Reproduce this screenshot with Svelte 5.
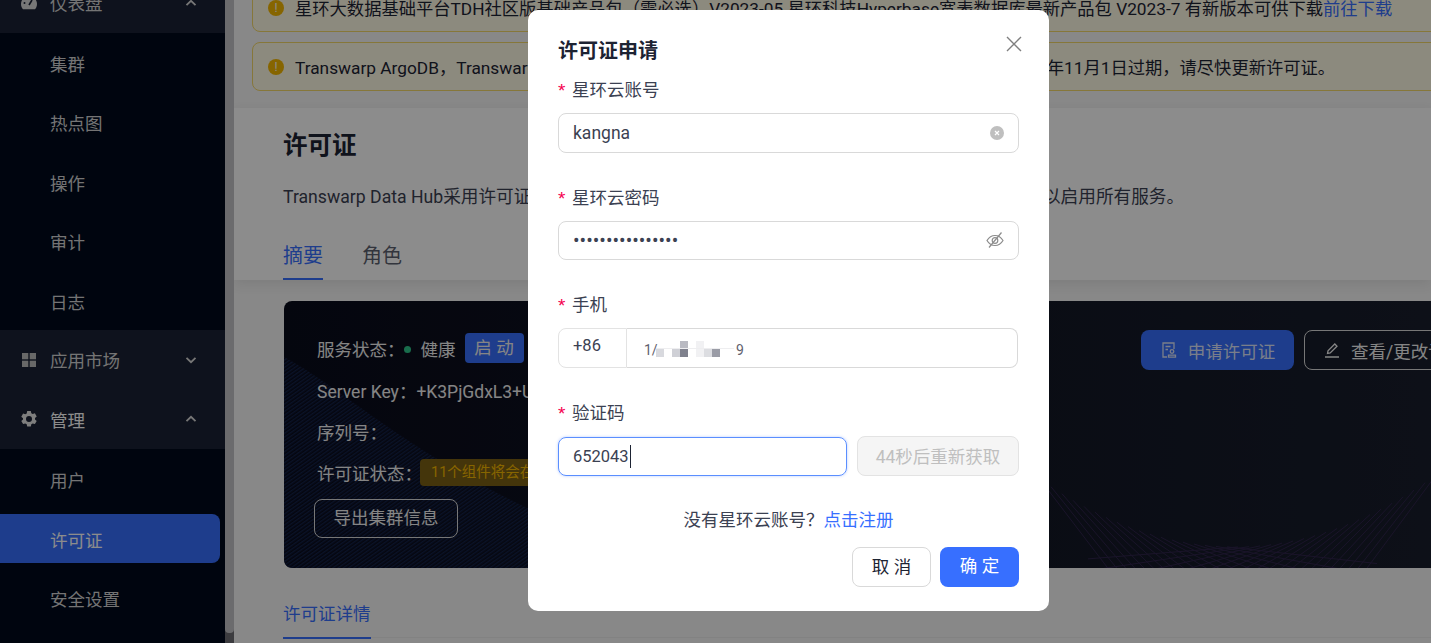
<script>
	const subA = ['集群', '热点图', '操作', '审计', '日志']
	const subB = ['用户', '许可证', '安全设置']

	// string-art decoration at the bottom right of the dark card
	const strands = []
	for (let x = 1040; x <= 1440; x += 11) {
		const dx = x - 1235
		const y = 246 - 0.00178 * dx * dx
		const slope = 2 * 0.00178 * Math.abs(dx) * 1.8 + 0.06
		const run = dx > 0 ? -150 : 150
		strands.push({ x1: x - 284, y1: y, x2: x - 284 + run, y2: y + slope * 150 })
	}
</script>

<div class="page">
	<aside class="sidebar">
		<div class="group">
			<svg class="gicon" viewBox="0 0 18 18"><path d="M9 2a8 8 0 0 0-8 8c0 2.2.8 4 2 5.2h12c1.2-1.2 2-3 2-5.2a8 8 0 0 0-8-8z" fill="#d9d9d9"/><path d="M9 11l3-5" stroke="#1b2235" stroke-width="1.6"/><circle cx="4.5" cy="9" r="1" fill="#1b2235"/><circle cx="9" cy="5" r="1" fill="#1b2235"/></svg>
			<span class="gtext">仪表盘</span>
			<svg class="chev" viewBox="0 0 12 8"><path d="M1.5 6.2 6 1.8l4.5 4.4" /></svg>
		</div>
		{#each subA as item}
			<div class="item">{item}</div>
		{/each}
		<div class="group">
			<svg class="gicon" viewBox="0 0 18 18" fill="#bdbdbd"><rect x="2" y="2" width="6.3" height="6.3"/><rect x="9.7" y="2" width="6.3" height="6.3"/><rect x="2" y="9.7" width="6.3" height="6.3"/><rect x="9.7" y="9.7" width="6.3" height="6.3"/></svg>
			<span class="gtext">应用市场</span>
			<svg class="chev" viewBox="0 0 12 8"><path d="M1.5 1.8 6 6.2l4.5-4.4" /></svg>
		</div>
		<div class="group">
			<svg class="gicon" viewBox="0 0 18 18"><path fill="#e6e6e6" fill-rule="evenodd" d="M7.2 1h3.6l.5 2.2 1.4.8 2.2-.7 1.8 3.1-1.7 1.5v1.6l1.7 1.5-1.8 3.1-2.2-.7-1.4.8-.5 2.2H7.2l-.5-2.2-1.4-.8-2.2.7-1.8-3.1 1.7-1.5V8.200L1.300 6.700l1.800-3.100 2.200.7 1.400-.8zM9 6a3 3 0 1 0 0 6 3 3 0 0 0 0-6z"/></svg>
			<span class="gtext on">管理</span>
			<svg class="chev" viewBox="0 0 12 8"><path d="M1.5 6.2 6 1.8l4.5 4.4" /></svg>
		</div>
		{#each subB as item}
			<div class="item" class:active={item === '许可证'}>{item}</div>
		{/each}
	</aside>

	<div class="scrollbar"><div class="thumb"></div></div>

	<main class="main">
		<div class="alert">
			<span class="alert-icon">!</span>
			<span>星环大数据基础平台TDH社区版基础产品包（需必选）V2023-05 星环科技Hyperbase宽表数据库最新产品包 V2023-7 有新版本可供下载<span class="more">前往下载</span></span>
		</div>
		<div class="alert">
			<span class="alert-icon">!</span>
			<span>Transwarp ArgoDB，Transwarp Inceptor，Transwarp Slipstream 等 11个组件的许可证将会在2023年11月1日过期，请尽快更新许可证。</span>
		</div>

		<section class="head">
			<h1>许可证</h1>
			<p>Transwarp Data Hub采用许可证授权方式，请在申请许可证后更新集群的许可证并重新启动集群，以启用所有服务。</p>
			<div class="tabs">
				<span class="tab current">摘要</span>
				<span class="tab">角色</span>
			</div>
		</section>

		<section class="card">
			<svg class="decor" width="1200" height="267" viewBox="0 0 1200 267">
				<defs>
					<pattern id="hatch" width="3" height="3" patternUnits="userSpaceOnUse" patternTransform="rotate(-35)">
						<rect width="3" height="1.4" fill="#14234a" />
					</pattern>
				</defs>
				<path d="M0 56C60 88 120 150 260 215V267H0Z" fill="url(#hatch)" />
				{#each strands as s}
					<line x1={s.x1} y1={s.y1} x2={s.x2} y2={s.y2} stroke="#30254c" stroke-width="1" />
				{/each}
			</svg>
			<div class="info">
				<div class="row first">
					<span>服务状态：</span><i class="dot"></i><span class="health">健康</span>
					<span class="start">启 动</span>
				</div>
				<div class="row">Server Key：+K3PjGdxL3+UwQe7mN2</div>
				<div class="row">序列号：</div>
				<div class="row">
					<span>许可证状态：</span><span class="warn">11个组件将会在2023年11月1日过期</span>
				</div>
				<div class="export">导出集群信息</div>
			</div>
			<div class="actions">
				<div class="btn-blue">
					<svg width="18" height="18" viewBox="0 0 18 18" fill="none" stroke="currentColor" stroke-width="1.3"><path d="M7 16H3V2h11v6"/><path d="M5.500 5.500h5M5.500 8.500h2.500"/><circle cx="12" cy="10.500" r="1.800"/><path d="M8.500 16.200h7v-2h-7z"/></svg>
					<span>申请许可证</span>
				</div>
				<div class="btn-line">
					<svg width="18" height="18" viewBox="0 0 18 18" fill="none" stroke="currentColor" stroke-width="1.300"><path d="M4.500 12.500 5 9.800 11.800 3l2.200 2.200-6.800 6.800zM2 16h14"/></svg>
					<span>查看/更改许可证</span>
				</div>
			</div>
		</section>

		<div class="detail"><span>许可证详情</span></div>
	</main>

	<div class="overlay">
		<div class="modal">
			<svg class="close" width="16" height="16" viewBox="0 0 16 16"><path d="M1 1l14 14M15 1 1 15" stroke="#7f7f7f" stroke-width="1.400" /></svg>
			<div class="title">许可证申请</div>

			<div class="field">
				<div class="label"><b>*</b>星环云账号</div>
				<div class="box">
					<input value="kangna" />
					<svg width="14" height="14" viewBox="0 0 14 14"><circle cx="7" cy="7" r="7" fill="#bfbfbf"/><path d="M5 5l4 4M9 5 5 9" stroke="#fff" stroke-width="1.200"/></svg>
				</div>
			</div>

			<div class="field">
				<div class="label"><b>*</b>星环云密码</div>
				<div class="box">
					<input class="secret" type="password" value="aaaaaaaaaaaaaaaa" />
					<svg width="18" height="18" viewBox="0 0 18 18" fill="none" stroke="#8c8c8c" stroke-width="1.200"><path d="M1 9.500c2-3.300 4.600-5 8-5s6 1.700 8 5c-2 3.300-4.600 5-8 5s-6-1.700-8-5z"/><circle cx="9" cy="9.500" r="2.800"/><path d="M3 16.500 15.500 1.500"/></svg>
				</div>
			</div>

			<div class="field">
				<div class="label"><b>*</b>手机</div>
				<div class="phone">
					<div class="prefix">+86</div>
					<div class="box grow">
						<span class="masked">1/</span>
						<svg class="mosaic" width="96" height="20" viewBox="0 0 96 20">
							<rect x="13" y="8" width="8" height="8" fill="#d8d9de"/>
							<rect x="29" y="8" width="8" height="8" fill="#cfd0d6"/>
							<rect x="37" y="0" width="8" height="8" fill="#b9bac2"/>
							<rect x="37" y="8" width="8" height="8" fill="#7f818d"/>
							<rect x="53" y="0" width="8" height="16" fill="#f1f1f3"/>
							<rect x="61" y="8" width="8" height="8" fill="#dcdde1"/>
							<rect x="69" y="8" width="8" height="8" fill="#9a9ca6"/>
							<rect x="13" y="7" width="78" height="1" fill="#eeeef0"/>
						</svg>
						<span class="masked last">9</span>
					</div>
				</div>
			</div>

			<div class="field">
				<div class="label"><b>*</b>验证码</div>
				<div class="code-row">
					<div class="box focus"><span>652043</span><i class="caret"></i></div>
					<div class="resend">44秒后重新获取</div>
				</div>
			</div>

			<div class="signup">没有星环云账号？<span>点击注册</span></div>

			<div class="footer">
				<div class="cancel">取 消</div>
				<div class="ok">确 定</div>
			</div>
		</div>
	</div>
</div>

<style>
	:global(body) {
		margin: 0;
		overflow: hidden;
	}
	.page {
		position: relative;
		display: flex;
		width: 1431px;
		height: 643px;
		overflow: hidden;
		font-family: Roboto, "Noto Sans CJK SC", sans-serif;
		font-size: 17.500px;
		color: #1d2333;
	}
	.sidebar {
		flex: none;
		display: flex;
		flex-direction: column;
		width: 225px;
		height: 700px;
		margin-top: -27px;
		background: #000a1d;
		color: #d4d4d4;
	}
	.group {
		flex: none;
		display: flex;
		align-items: center;
		height: 59.500px;
		padding-left: 20px;
		box-sizing: border-box;
		background: #1b2235;
	}
	.gicon {
		width: 18px;
		height: 18px;
		margin-right: 12px;
	}
	.gtext {
		flex: 1;
	}
	.gtext.on {
		color: #fff;
	}
	.chev {
		width: 12px;
		height: 8px;
		margin-right: 28px;
		fill: none;
		stroke: #d9d9d9;
		stroke-width: 1.800;
	}
	.item {
		flex: none;
		display: flex;
		align-items: center;
		height: 49.500px;
		margin: 5px 5px 5px 0;
		padding: 2px 0 0 50px;
		box-sizing: border-box;
	}
	.item.active {
		background: #376fff;
		border-radius: 0 8px 8px 0;
		color: #fff;
	}
	.scrollbar {
		flex: none;
		width: 9px;
		background: #6d6d73;
	}
	.thumb {
		height: 633px;
		background: #c4c4c6;
		border-radius: 0 0 4px 4px;
	}
	.main {
		flex: 1;
		min-width: 0;
		margin-top: -17px;
		background: #f7f7f7;
		overflow: hidden;
	}
	.alert {
		display: flex;
		align-items: center;
		gap: 11px;
		height: 49px;
		box-sizing: border-box;
		margin: 0 -20px 10px 18px;
		padding-left: 15px;
		background: #fffbe6;
		border: 1px solid #f5d96a;
		border-radius: 8px;
		font-size: 17.300px;
		white-space: nowrap;
	}
	.alert-icon {
		flex: none;
		width: 16px;
		height: 16px;
		line-height: 16px;
		border-radius: 50%;
		background: #f5b800;
		color: #fff;
		font-size: 12px;
		text-align: center;
	}
	.more {
		color: #376fff;
	}
	.head {
		margin-top: 17px;
		height: 172px;
		padding: 21px 0 0 49px;
		box-sizing: border-box;
		background: #fff;
		box-shadow: 0 4px 12px rgba(0, 0, 0, 0.08);
		white-space: nowrap;
	}
	h1 {
		margin: 0;
		font-size: 24.500px;
		line-height: 34px;
		font-weight: 700;
	}
	.head p {
		margin: 22px 0 0;
		line-height: 24px;
		font-size: 17.650px;
		color: #3b4152;
	}
	.tabs {
		display: flex;
		gap: 39px;
		margin-top: 32px;
	}
	.tab {
		height: 39px;
		line-height: 30px;
		box-sizing: border-box;
		font-size: 20px;
		color: #5c6270;
	}
	.tab.current {
		color: #376fff;
		border-bottom: 2px solid #376fff;
	}
	.card {
		position: relative;
		display: flex;
		justify-content: space-between;
		width: 1200px;
		height: 267px;
		margin: 21px 0 0 50px;
		box-sizing: border-box;
		padding: 29px 0 0 33px;
		border-radius: 8px;
		overflow: hidden;
		background: linear-gradient(90deg, #090b1b, #191f2d);
		color: #f2f2f2;
	}
	.decor {
		position: absolute;
		left: 0;
		top: 0;
	}
	.info, .actions {
		position: relative;
	}
	.row {
		display: flex;
		align-items: center;
		height: 41px;
		white-space: nowrap;
	}
	.row.first {
		height: 36px;
		margin-bottom: 4px;
	}
	.dot {
		width: 7px;
		height: 7px;
		margin: 2px 10px 0 -1px;
		border-radius: 50%;
		background: #2fc78b;
	}
	.start {
		width: 59px;
		height: 30px;
		line-height: 30px;
		margin-left: 9px;
		border-radius: 4px;
		text-align: center;
		background: #376fff;
	}
	.warn {
		margin-left: -2px;
		padding: 0 11px;
		line-height: 27px;
		border-radius: 4px;
		background: #7d6114;
		color: #f5b800;
		font-size: 14.500px;
	}
	.export {
		display: inline-block;
		width: 144px;
		height: 39px;
		line-height: 37px;
		margin: 6px 0 0 -3px;
		box-sizing: border-box;
		border: 1px solid #d9d9d9;
		border-radius: 8px;
		text-align: center;
	}
	.actions {
		display: flex;
		gap: 10px;
		width: 343px;
	}
	.btn-blue, .btn-line {
		display: flex;
		align-items: center;
		gap: 10px;
		flex: none;
		height: 40px;
		box-sizing: border-box;
		border-radius: 8px;
		white-space: nowrap;
	}
	.btn-blue {
		justify-content: center;
		width: 153px;
		background: #376fff;
		color: #dfe6fb;
	}
	.btn-line {
		width: 200px;
		padding-left: 18px;
		border: 1px solid #d9d9d9;
	}
	.detail {
		margin: 33px 0 0 49px;
		border-bottom: 1px solid #ededed;
		height: 36px;
	}
	.detail span {
		display: inline-block;
		height: 36px;
		line-height: 26px;
		color: #376fff;
		border-bottom: 2px solid #376fff;
	}
	.overlay {
		position: absolute;
		inset: 0;
		background: rgba(0, 0, 0, 0.45);
		padding: 10px 0 0 528px;
	}
	.modal {
		position: relative;
		width: 521px;
		height: 601px;
		box-sizing: border-box;
		padding: 26px 30px 0;
		background: #fff;
		border-radius: 10px;
	}
	.close {
		position: absolute;
		top: 26px;
		right: 27px;
	}
	.title {
		font-size: 20px;
		line-height: 30px;
		font-weight: 700;
		margin-bottom: 12px;
	}
	.field {
		margin-bottom: 33px;
	}
	.label {
		display: flex;
		height: 24px;
		line-height: 25px;
		margin-bottom: 11px;
		color: #3b4152;
	}
	.label b {
		width: 14px;
		margin-left: -2px;
		padding-right: 2px;
		color: #f5004f;
		font-family: "Liberation Mono", monospace;
		font-size: 19px;
		line-height: 29px;
		font-weight: 400;
	}
	.box {
		display: flex;
		align-items: center;
		height: 39.500px;
		box-sizing: border-box;
		padding: 0 14px;
		border: 1px solid #d9d9d9;
		border-radius: 8px;
	}
	input {
		flex: 1;
		min-width: 0;
		border: 0;
		outline: 0;
		padding: 0;
		font: inherit;
		color: #3b4152;
	}
	input.secret {
		font-size: 19.500px;
	}
	.phone {
		display: flex;
		width: 460px;
	}
	.prefix {
		width: 69px;
		height: 40px;
		line-height: 34px;
		box-sizing: border-box;
		padding-left: 14px;
		border: 1px solid #e3e3e3;
		border-radius: 8px 0 0 8px;
		color: #3b4152;
		font-size: 16.500px;
	}
	.grow {
		position: relative;
		flex: 1;
		border-left: 0;
		border-radius: 0 8px 8px 0;
		padding-left: 17px;
		color: #5f616d;
		font-size: 14px;
	}
	.masked {
		margin-top: 4px;
	}
	.masked.last {
		position: absolute;
		left: 109px;
	}
	.mosaic {
		position: absolute;
		left: 16px;
		top: 12px;
	}
	.code-row {
		display: flex;
		gap: 10px;
	}
	.focus {
		flex: none;
		width: 289px;
		height: 39px;
		margin-top: 1px;
		border-color: #5b8fff;
		box-shadow: 0 0 3px rgba(54, 113, 255, 0.35);
		color: #3b4152;
		font-size: 16.500px;
	}
	.caret {
		width: 1px;
		height: 23px;
		background: #1d2333;
		margin-left: 1px;
	}
	.resend {
		flex: 1;
		height: 40px;
		line-height: 40px;
		text-align: center;
		box-sizing: border-box;
		border: 1px solid #e3e3e3;
		border-radius: 8px;
		background: #f5f5f5;
		color: #bfbfbf;
	}
	.signup {
		margin-top: -1px;
		text-align: center;
		line-height: 24px;
		color: #3b4152;
	}
	.signup span {
		color: #376fff;
	}
	.footer {
		display: flex;
		justify-content: flex-end;
		gap: 9px;
		margin-top: 15px;
	}
	.cancel, .ok {
		width: 79px;
		height: 40px;
		line-height: 38px;
		box-sizing: border-box;
		border-radius: 8px;
		text-align: center;
	}
	.cancel {
		border: 1px solid #d9d9d9;
	}
	.ok {
		background: #376fff;
		color: #fff;
	}
</style>
